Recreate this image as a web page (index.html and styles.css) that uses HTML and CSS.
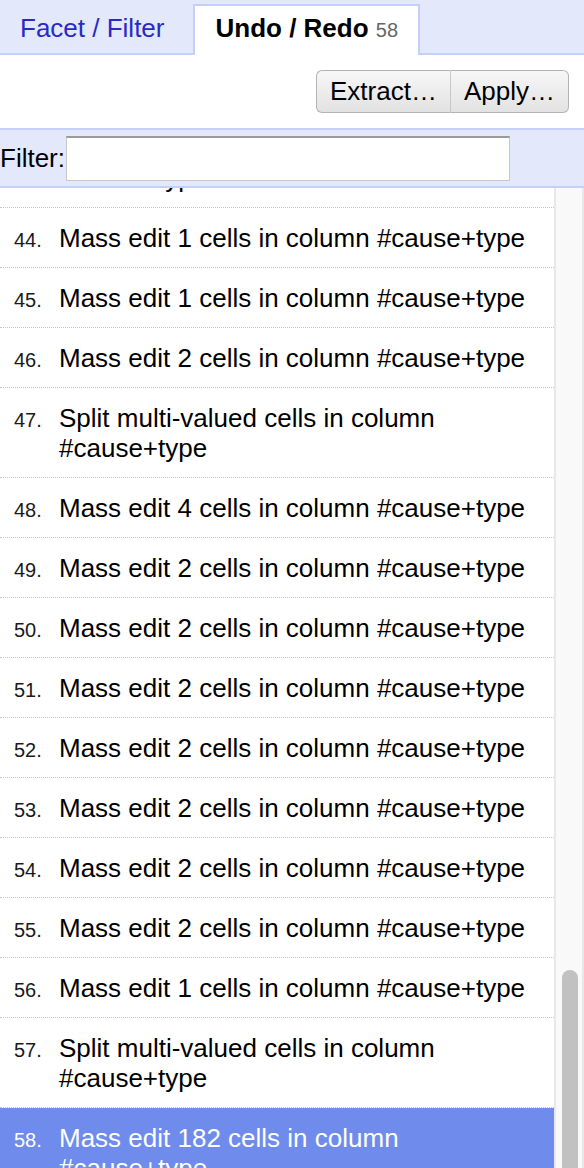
FILE: index.html
```html
<!DOCTYPE html>
<html>
<head>
<meta charset="utf-8">
<link rel="stylesheet" href="styles.css">
</head>
<body>
<div class="panel">
  <div class="tabs">
    <div class="tab">Facet / Filter</div>
    <div class="tab active">Undo / Redo <span class="count">58</span></div>
  </div>
  <div class="toolbar">
    <div class="buttonset">
      <button class="btn first">Extract…</button><button class="btn last">Apply…</button>
    </div>
  </div>
  <div class="filterbar">
    <label class="filter-label">Filter:</label><input class="filter-input" type="text">
  </div>
  <div class="history">
    <div class="viewport">
      <div class="entries">
        <div class="entry"><span class="idx">43.</span><span class="txt">Split multi-valued cells in column #cause+type</span></div>
        <div class="entry"><span class="idx">44.</span><span class="txt">Mass edit 1 cells in column #cause+type</span></div>
        <div class="entry"><span class="idx">45.</span><span class="txt">Mass edit 1 cells in column #cause+type</span></div>
        <div class="entry"><span class="idx">46.</span><span class="txt">Mass edit 2 cells in column #cause+type</span></div>
        <div class="entry"><span class="idx">47.</span><span class="txt">Split multi-valued cells in column #cause+type</span></div>
        <div class="entry"><span class="idx">48.</span><span class="txt">Mass edit 4 cells in column #cause+type</span></div>
        <div class="entry"><span class="idx">49.</span><span class="txt">Mass edit 2 cells in column #cause+type</span></div>
        <div class="entry"><span class="idx">50.</span><span class="txt">Mass edit 2 cells in column #cause+type</span></div>
        <div class="entry"><span class="idx">51.</span><span class="txt">Mass edit 2 cells in column #cause+type</span></div>
        <div class="entry"><span class="idx">52.</span><span class="txt">Mass edit 2 cells in column #cause+type</span></div>
        <div class="entry"><span class="idx">53.</span><span class="txt">Mass edit 2 cells in column #cause+type</span></div>
        <div class="entry"><span class="idx">54.</span><span class="txt">Mass edit 2 cells in column #cause+type</span></div>
        <div class="entry"><span class="idx">55.</span><span class="txt">Mass edit 2 cells in column #cause+type</span></div>
        <div class="entry"><span class="idx">56.</span><span class="txt">Mass edit 1 cells in column #cause+type</span></div>
        <div class="entry"><span class="idx">57.</span><span class="txt">Split multi-valued cells in column #cause+type</span></div>
        <div class="entry current"><span class="idx">58.</span><span class="txt">Mass edit 182 cells in column #cause+type</span></div>
      </div>
    </div>
    <div class="scrollbar"><div class="thumb"></div></div>
  </div>
</div>
</body>
</html>
```

FILE: styles.css
```css
* { box-sizing: border-box; }
html, body {
  margin: 0;
  padding: 0;
  width: 584px;
  height: 1168px;
  overflow: hidden;
  background: #fff;
  font-family: "Liberation Sans", Arial, sans-serif;
  color: #000;
}
.panel {
  display: flex;
  flex-direction: column;
  height: 1168px;
}
.tabs {
  display: flex;
  align-items: flex-end;
  height: 55px;
  background: #e3e9fb;
  border-bottom: 2px solid #c3d0f7;
}
.tab {
  font-size: 26px;
  line-height: 30px;
  padding: 0 20px 10px 20px;
  color: #2929c8;
  margin-right: 9px;
  white-space: nowrap;
}
.tab.active {
  background: #fff;
  color: #000;
  font-weight: bold;
  border: 2px solid #c3d0f7;
  border-bottom: none;
  height: 51px;
  margin-bottom: -2px;
  padding: 7px 20px 0 20px;
}
.count {
  font-weight: normal;
  font-size: 20px;
  color: #666;
}
.toolbar {
  height: 73px;
  display: flex;
  justify-content: flex-end;
  align-items: flex-start;
  padding: 15px 15px 0 0;
}
.buttonset { display: flex; }
.btn {
  font-family: "Liberation Sans", Arial, sans-serif;
  font-size: 26px;
  color: #000;
  height: 43px;
  margin: 0;
  padding: 0 13px;
  background: linear-gradient(#f7f7f7, #e2e2e2);
  border: 1px solid #b4b4b4;
  white-space: nowrap;
}
.btn.first { border-radius: 6px 0 0 6px; border-right: 1px solid #c8c8c8; }
.btn.last { border-radius: 0 6px 6px 0; border-left: none; }
.filterbar {
  height: 60px;
  background: #e3e9fb;
  border-top: 2px solid #c3d0f7;
  border-bottom: 2px solid #c3d0f7;
  display: flex;
  align-items: center;
}
.filter-label {
  font-size: 26px;
  color: #000;
  white-space: nowrap;
}
.filter-input {
  width: 444px;
  height: 45px;
  margin: 0 0 0 1px;
  border: 1px solid #c8c8c8;
  border-top: 2px solid #9a9a9a;
  background: #fff;
}
.history {
  flex: 1;
  display: flex;
  min-height: 0;
}
.viewport {
  width: 554px;
  overflow: hidden;
}
.entries {
  margin-top: -70px;
}
.entry {
  display: flex;
  align-items: flex-start;
  padding: 15px 14px 14px 14px;
  border-bottom: 1px dotted #c6c6c6;
}
.idx {
  width: 45px;
  flex: none;
  font-size: 20px;
  line-height: 26px;
  padding-top: 4px;
  color: #1a1a1a;
}
.txt {
  font-size: 26px;
  line-height: 30px;
  color: #000;
}
.entry.current {
  background: #6f8cec;
}
.entry.current .idx,
.entry.current .txt { color: #fff; }
.scrollbar {
  width: 30px;
  background: #f9f9f9;
  border-left: 2px solid #e8e8e8;
  border-right: 2px solid #e8e8e8;
  overflow: hidden;
  padding: 782px 4px 0 6px;
}
.thumb {
  height: 400px;
  background: #c1c1c1;
  border-radius: 8px;
}
```
